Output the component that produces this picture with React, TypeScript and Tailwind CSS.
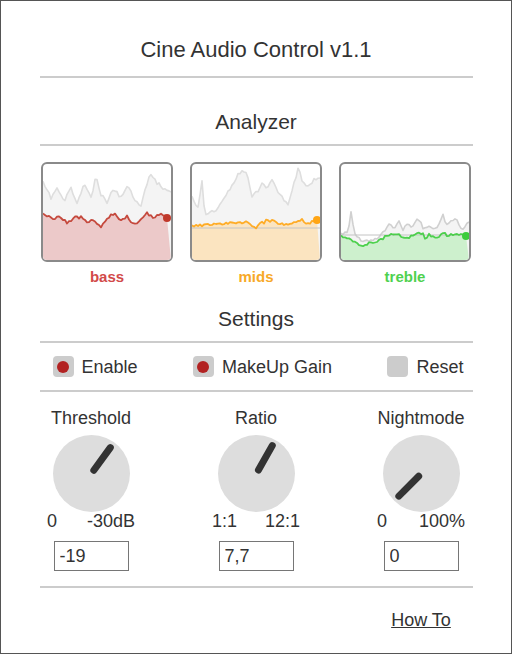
import React from "react";

type Pt = [number, number];

// small seeded rng so the jitter is the same each render
function rng(seed: number) {
  let s = seed;
  return () => {
    s = (s * 16807) % 2147483647;
    return (s - 1) / 2147483646;
  };
}

function densify(keys: Pt[], seed: number, amp: number): Pt[] {
  const r = rng(seed);
  const out: Pt[] = [];
  const last = keys[keys.length - 1][0];
  for (let x = keys[0][0]; x < last; x += 2) {
    let i = 0;
    while (i < keys.length - 2 && keys[i + 1][0] <= x) i++;
    const [x0, y0] = keys[i];
    const [x1, y1] = keys[i + 1];
    const t = x1 === x0 ? 0 : (x - x0) / (x1 - x0);
    out.push([x, y0 + (y1 - y0) * t + (r() - 0.5) * 2 * amp]);
  }
  out.push(keys[keys.length - 1]);
  return out;
}

const toLine = (pts: Pt[]) => pts.map(([x, y], i) => `${i ? "L" : "M"}${x.toFixed(1)} ${y.toFixed(1)}`).join(" ");
const toArea = (pts: Pt[]) => `${toLine(pts)} L128 96 L0 96 Z`;

const charts = [
  {
    label: "bass",
    labelColor: "text-[#d24a4a]",
    line: "#c0392b",
    fill: "#ecc9c9",
    grayLine: "#dedede",
    threshold: null as number | null,
    gray: [[0, 19], [8, 34], [14, 24], [21, 38], [28, 23], [34, 41], [41, 19], [48, 34], [53, 13], [58, 31], [64, 38], [71, 24], [78, 34], [84, 21], [91, 34], [98, 41], [103, 23], [108, 9], [114, 19], [119, 23], [128, 28]] as Pt[],
    main: [[0, 51], [11, 54], [18, 53], [24, 58], [31, 54], [38, 53], [44, 58], [51, 56], [58, 63], [64, 54], [71, 49], [78, 56], [84, 53], [91, 61], [98, 54], [104, 49], [111, 53], [118, 51], [124, 54]] as Pt[],
  },
  {
    label: "mids",
    labelColor: "text-[#f7a928]",
    line: "#ffa514",
    fill: "#fbe4c0",
    grayLine: "#dedede",
    threshold: 64,
    gray: [[0, 34], [6, 44], [10, 18], [13, 51], [20, 48], [26, 44], [33, 34], [40, 21], [46, 11], [53, 6], [56, 14], [60, 34], [65, 28], [70, 18], [75, 24], [80, 16], [86, 28], [93, 38], [96, 41], [100, 28], [106, 4], [111, 18], [116, 23], [121, 16], [128, 14]] as Pt[],
    main: [[0, 63], [13, 61], [26, 59], [36, 59], [46, 58], [56, 59], [63, 64], [70, 59], [76, 56], [83, 58], [90, 59], [96, 61], [103, 58], [110, 56], [116, 59], [121, 57], [125, 56]] as Pt[],
  },
  {
    label: "treble",
    labelColor: "text-[#4fd14f]",
    line: "#3dcc3d",
    fill: "#cdf0cd",
    grayLine: "#d0d0d0",
    threshold: 71,
    gray: [[0, 71], [7, 68], [10, 46], [13, 68], [17, 74], [22, 76], [28, 76], [35, 74], [42, 69], [45, 63], [48, 59], [53, 64], [58, 58], [62, 66], [67, 59], [72, 63], [77, 54], [82, 64], [87, 61], [92, 66], [97, 61], [102, 49], [105, 63], [110, 58], [115, 54], [120, 66], [128, 58]] as Pt[],
    main: [[0, 73], [8, 74], [15, 79], [22, 82], [28, 79], [35, 78], [42, 74], [48, 71], [55, 71], [62, 72], [68, 73], [75, 70], [82, 69], [85, 76], [88, 71], [95, 73], [102, 70], [108, 71], [115, 69], [122, 71], [125, 72]] as Pt[],
  },
];

function Chart({ c, seed }: { c: (typeof charts)[number]; seed: number }) {
  const gray = densify(c.gray, seed, 1.8);
  const main = densify(c.main, seed + 7, 1.6);
  const end = c.main[c.main.length - 1];
  return (
    <div className="flex flex-col items-center">
      <div className="w-[132px] h-[100px] border-2 border-[#8a8a8a] rounded-[6px] overflow-hidden bg-white">
        <svg width="128" height="96" viewBox="0 0 128 96">
          <path d={toArea(gray)} fill="#f4f4f4" />
          <path d={toLine(gray)} fill="none" stroke={c.grayLine} strokeWidth="1.6" strokeLinejoin="round" />
          <path d={toArea(main)} fill={c.fill} />
          {c.threshold !== null && <line x1="0" x2="128" y1={c.threshold} y2={c.threshold} stroke="#c4c4c4" strokeWidth="1" />}
          <path d={toLine(main)} fill="none" stroke={c.line} strokeWidth="1.8" strokeLinejoin="round" opacity="0.9" />
          <circle cx={end[0]} cy={end[1]} r="4" fill={c.line} />
        </svg>
      </div>
      <div className={`mt-[5px] text-[15px] leading-[20px] font-bold ${c.labelColor}`}>{c.label}</div>
    </div>
  );
}

function Rule() {
  return <div className="w-[433px] h-[2px] bg-[#cccccc] mx-auto" />;
}

function Check({ label, on }: { label: string; on: boolean }) {
  return (
    <div className="flex items-center gap-[8px]">
      <div className="w-[21px] h-[21px] rounded-[4px] bg-[#cccccc] flex items-center justify-center">
        {on && <div className="w-[12px] h-[12px] rounded-full bg-[#b22222]" />}
      </div>
      <span className="text-[18px] leading-[22px]">{label}</span>
    </div>
  );
}

const knobs = [
  { label: "Threshold", min: "0", max: "-30dB", value: "-19", angle: 36 },
  { label: "Ratio", min: "1:1", max: "12:1", value: "7,7", angle: 29.5 },
  { label: "Nightmode", min: "0", max: "100%", value: "0", angle: -135 },
];

function Knob({ angle }: { angle: number }) {
  const a = (angle * Math.PI) / 180;
  const c = 38.5;
  return (
    <svg width="77" height="77" viewBox="0 0 77 77">
      <circle cx={c} cy={c} r="38.5" fill="#dddddd" />
      <line
        x1={c + 4 * Math.sin(a)}
        y1={c - 4 * Math.cos(a)}
        x2={c + 32 * Math.sin(a)}
        y2={c - 32 * Math.cos(a)}
        stroke="#333333"
        strokeWidth="7"
        strokeLinecap="round"
      />
    </svg>
  );
}

export default function App() {
  return (
    <div className="w-[512px] h-[654px] border border-[#555555] bg-white text-[#333333] font-['Liberation_Sans',Arial,sans-serif]">
      <div className="h-[75px] pt-[36px] text-center text-[22px] leading-[26px]">Cine Audio Control v1.1</div>
      <Rule />
      <div className="h-[66px] pt-[31px] text-center text-[21px] leading-[26px]">Analyzer</div>
      <Rule />

      <div className="mt-[16px] flex justify-center gap-[17px]">
        {charts.map((c, i) => (
          <Chart key={c.label} c={c} seed={11 + i * 31} />
        ))}
      </div>

      <div className="mt-[19px] text-center text-[21px] leading-[26px]">Settings</div>
      <div className="mt-[9px]">
        <Rule />
      </div>
      <div className="h-[47px] w-[433px] mx-auto pl-[13px] pr-[9px] flex items-center justify-between">
        <Check label="Enable" on />
        <Check label="MakeUp Gain" on />
        <Check label="Reset" on={false} />
      </div>
      <Rule />

      <div className="w-[495px] mx-auto grid grid-cols-3">
        {knobs.map((k) => (
          <div key={k.label} className="flex flex-col items-center">
            <div className="mt-[15px] text-[18px] leading-[22px]">{k.label}</div>
            <div className="mt-[6px] h-[77px]">
              <Knob angle={k.angle} />
            </div>
            <div className="w-[88px] flex justify-between text-[18px] leading-[18px]">
              <span>{k.min}</span>
              <span>{k.max}</span>
            </div>
            <input
              readOnly
              value={k.value}
              className="mt-[11px] w-[75px] h-[30px] border border-[#767676] px-[5px] text-[18px] text-[#333333] outline-none"
            />
          </div>
        ))}
      </div>

      <div className="mt-[15px]">
        <Rule />
      </div>
      <div className="w-[495px] mx-auto grid grid-cols-3">
        <div />
        <div />
        <div className="mt-[21px] text-center">
          <a href="#" className="text-[18px] leading-[22px] underline text-[#333333]">
            How To
          </a>
        </div>
      </div>
    </div>
  );
}
